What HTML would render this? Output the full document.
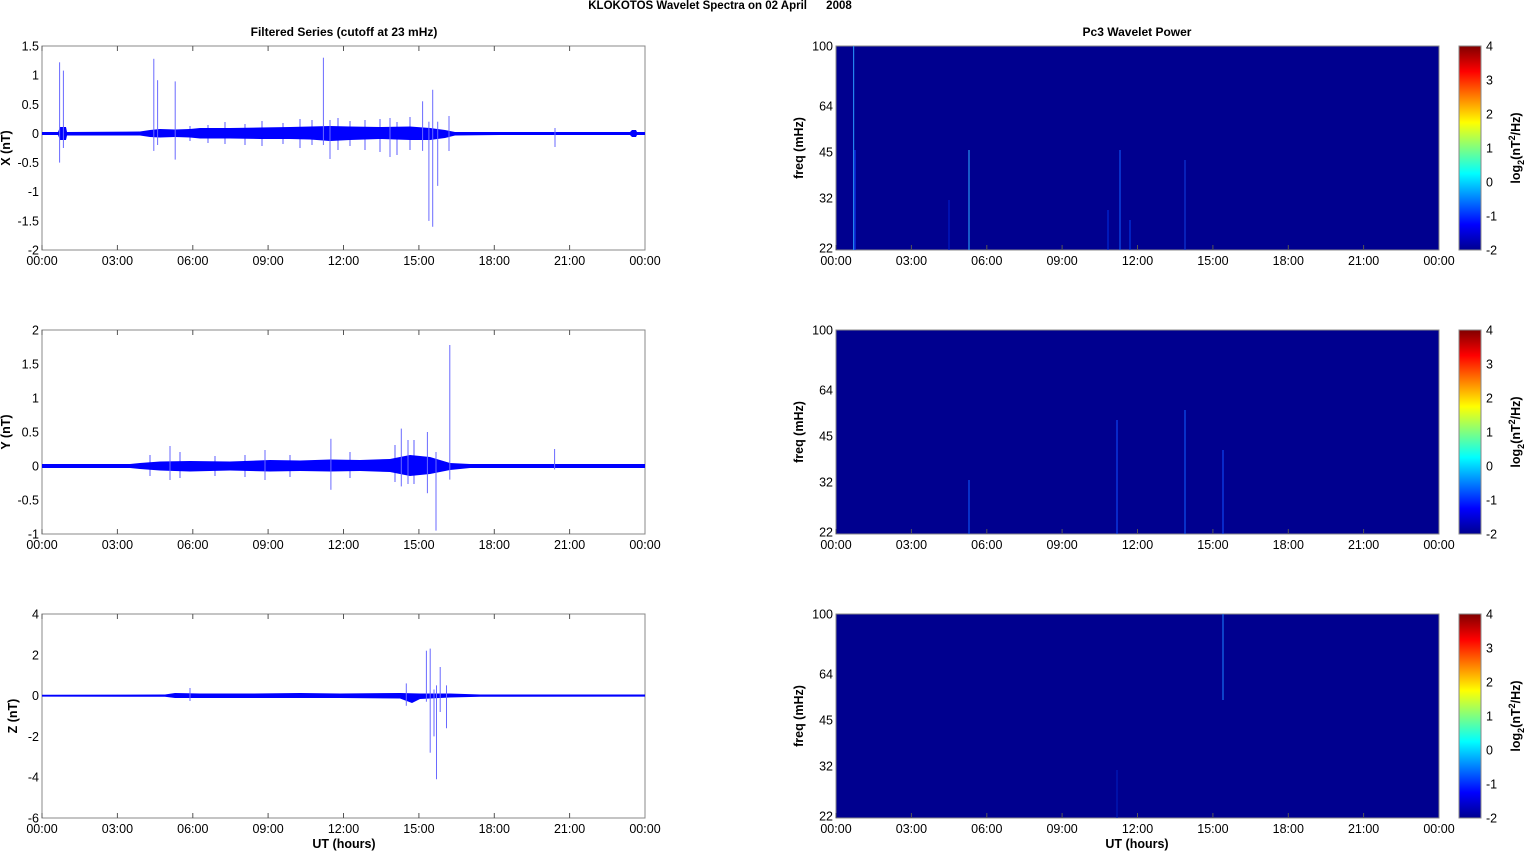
<!DOCTYPE html>
<html><head><meta charset="utf-8"><style>
html,body{margin:0;padding:0;background:#fff;width:1526px;height:851px;overflow:hidden;}
svg{display:block;font-family:"Liberation Sans",Arial,sans-serif;}
</style></head><body>
<svg width="1526" height="851" viewBox="0 0 1526 851" xmlns="http://www.w3.org/2000/svg">
<defs>
<linearGradient id="jet" x1="0" y1="1" x2="0" y2="0">
<stop offset="0" stop-color="#00008f"/>
<stop offset="0.125" stop-color="#0000ff"/>
<stop offset="0.375" stop-color="#00ffff"/>
<stop offset="0.625" stop-color="#ffff00"/>
<stop offset="0.875" stop-color="#ff0000"/>
<stop offset="1" stop-color="#800000"/>
</linearGradient>
<g id="xt">
<line x1="42" y1="0" x2="42" y2="-5"/><line x1="117.4" y1="0" x2="117.4" y2="-5"/><line x1="192.8" y1="0" x2="192.8" y2="-5"/><line x1="268.1" y1="0" x2="268.1" y2="-5"/><line x1="343.5" y1="0" x2="343.5" y2="-5"/><line x1="418.9" y1="0" x2="418.9" y2="-5"/><line x1="494.3" y1="0" x2="494.3" y2="-5"/><line x1="569.6" y1="0" x2="569.6" y2="-5"/>
</g>
<g id="xl" font-size="12.5" text-anchor="middle" fill="#000" stroke="none">
<text x="42" y="15">00:00</text><text x="117.4" y="15">03:00</text><text x="192.8" y="15">06:00</text><text x="268.1" y="15">09:00</text><text x="343.5" y="15">12:00</text><text x="418.9" y="15">15:00</text><text x="494.3" y="15">18:00</text><text x="569.6" y="15">21:00</text><text x="645" y="15">00:00</text>
</g>
<g id="cb">
<rect x="1459" y="0" width="22" height="204" fill="url(#jet)" stroke="#888"/>
<g font-size="12.5"><text x="1486" y="4.5">4</text><text x="1486" y="38.5">3</text><text x="1486" y="72.5">2</text><text x="1486" y="106.5">1</text><text x="1486" y="140.5">0</text><text x="1486" y="174.5">-1</text><text x="1486" y="208.5">-2</text></g>
<text transform="translate(1520,102) rotate(-90)" font-size="12.5" font-weight="bold" text-anchor="middle">log<tspan font-size="9" dy="4">2</tspan><tspan dy="-4">(nT</tspan><tspan font-size="9" dy="-5">2</tspan><tspan dy="5">/Hz)</tspan></text>
<rect x="836" y="0" width="603" height="204" fill="#00008f" stroke="#888"/>
<g font-size="12.5" text-anchor="end"><text x="833" y="4.5">100</text><text x="833" y="64.5">64</text><text x="833" y="110.5">45</text><text x="833" y="156.5">32</text><text x="833" y="206.5">22</text></g>
<text transform="translate(803,102) rotate(-90)" font-size="12.5" font-weight="bold" text-anchor="middle">freq (mHz)</text>
</g>
</defs>
<text x="720" y="9" font-size="11.5" font-weight="bold" text-anchor="middle">KLOKOTOS Wavelet Spectra on 02 April&#160;&#160;&#160;&#160;&#160;&#160;2008</text>
<text x="344" y="36" font-size="12" font-weight="bold" text-anchor="middle">Filtered Series (cutoff at 23 mHz)</text>
<text x="1137" y="36" font-size="12" font-weight="bold" text-anchor="middle">Pc3 Wavelet Power</text>
<text x="344" y="848" font-size="12.5" font-weight="bold" text-anchor="middle">UT (hours)</text>
<text x="1137" y="848" font-size="12.5" font-weight="bold" text-anchor="middle">UT (hours)</text>

<!-- ===== X panel ===== -->
<rect x="42" y="46" width="603" height="204" fill="#fff" stroke="#888"/>
<g font-size="12.5" text-anchor="end">
<text x="39" y="50.5">1.5</text><text x="39" y="79.6">1</text><text x="39" y="108.8">0.5</text><text x="39" y="137.9">0</text><text x="39" y="167.1">-0.5</text><text x="39" y="196.2">-1</text><text x="39" y="225.4">-1.5</text><text x="39" y="254.5">-2</text>
</g>
<text transform="translate(10,148) rotate(-90)" font-size="12.5" font-weight="bold" text-anchor="middle">X (nT)</text>
<polygon fill="#0000ff" points="42,132 58,132 60,127 66,127 67,132 140,131.5 150,130 160,129 175,129.5 190,129 200,128 230,128 260,127.5 290,127 310,126.5 330,126 350,126.5 380,127 410,126.5 430,128 445,130 455,132 500,132 630,132 632,130 636,130 637,132 645,132 645,135 637,135 636,137 632,137 630,135 500,135 455,135.5 445,138 430,140 410,140 380,139 350,140 330,141 310,139.5 290,139 260,139 230,138.5 200,138.5 190,137.5 175,137 160,137.5 150,137 140,135.5 67,135.5 66,140 60,140 58,135 42,135"/>
<g stroke="#0000ff" stroke-width="0.8" opacity="0.8">
<line x1="190" y1="126" x2="190" y2="141"/><line x1="225" y1="122" x2="225" y2="144"/><line x1="262" y1="121" x2="262" y2="146"/><line x1="300" y1="119" x2="300" y2="148"/><line x1="312" y1="120" x2="312" y2="145"/><line x1="338" y1="118" x2="338" y2="150"/><line x1="365" y1="120" x2="365" y2="150"/><line x1="380" y1="119" x2="380" y2="152"/><line x1="397" y1="122" x2="397" y2="155"/><line x1="410" y1="117" x2="410" y2="150"/><line x1="208" y1="125" x2="208" y2="143"/><line x1="245" y1="124" x2="245" y2="145"/><line x1="283" y1="123" x2="283" y2="144"/><line x1="350" y1="121" x2="350" y2="146"/>
</g>
<g stroke="#6a6aff" stroke-width="1">
<line x1="59.6" y1="62.3" x2="59.6" y2="162.6"/><line x1="63.4" y1="70.6" x2="63.4" y2="148"/><line x1="153.8" y1="58.8" x2="153.8" y2="150.9"/><line x1="157.6" y1="80.2" x2="157.6" y2="145"/><line x1="175.2" y1="81.4" x2="175.2" y2="159.6"/><line x1="323.4" y1="57.7" x2="323.4" y2="145"/><line x1="422.6" y1="101.3" x2="422.6" y2="150.9"/><line x1="428.9" y1="121.7" x2="428.9" y2="220.9"/><line x1="432.7" y1="89.7" x2="432.7" y2="226.7"/><line x1="437.7" y1="121.7" x2="437.7" y2="185.9"/><line x1="449" y1="116" x2="449" y2="151"/><line x1="330" y1="120" x2="330" y2="159"/><line x1="390" y1="118" x2="390" y2="157"/><line x1="555" y1="128" x2="555" y2="147"/>
</g>
<g stroke="#555"><use href="#xt" y="250"/><use href="#xt" transform="translate(0,46) scale(1,-1)"/></g>
<use href="#xl" y="250"/>

<!-- ===== Y panel ===== -->
<rect x="42" y="330" width="603" height="204" fill="#fff" stroke="#888"/>
<g font-size="12.5" text-anchor="end">
<text x="39" y="334.5">2</text><text x="39" y="368.5">1.5</text><text x="39" y="402.5">1</text><text x="39" y="436.5">0.5</text><text x="39" y="470.5">0</text><text x="39" y="504.5">-0.5</text><text x="39" y="538.5">-1</text>
</g>
<text transform="translate(10,432) rotate(-90)" font-size="12.5" font-weight="bold" text-anchor="middle">Y (nT)</text>
<polygon fill="#0000ff" points="42,464 130,464 140,463 160,461.5 190,461 230,461.5 270,460 300,460.5 330,459.5 360,460 390,459 410,455 430,457 450,463 470,464 645,464 645,468 470,468 450,470 430,474 410,476 390,472 360,471 330,471.5 300,471 270,471.5 230,470.5 190,471.5 160,470.5 140,469 130,468 42,468"/>
<g stroke="#0000ff" stroke-width="0.8" opacity="0.8">
<line x1="150" y1="455" x2="150" y2="476"/><line x1="180" y1="452" x2="180" y2="478"/><line x1="215" y1="456" x2="215" y2="476"/><line x1="245" y1="455" x2="245" y2="477"/><line x1="290" y1="455" x2="290" y2="477"/><line x1="350" y1="452" x2="350" y2="478"/><line x1="395" y1="445" x2="395" y2="482"/><line x1="414" y1="440" x2="414" y2="484"/>
</g>
<g stroke="#6a6aff" stroke-width="1">
<line x1="449.8" y1="345" x2="449.8" y2="479.6"/><line x1="436" y1="452" x2="436" y2="530.6"/><line x1="401.3" y1="428.6" x2="401.3" y2="486.4"/><line x1="427.4" y1="432" x2="427.4" y2="493.2"/><line x1="330.9" y1="438.8" x2="330.9" y2="489.8"/><line x1="554.6" y1="449" x2="554.6" y2="469.4"/><line x1="408" y1="440" x2="408" y2="484"/><line x1="170" y1="446" x2="170" y2="480"/><line x1="265" y1="450" x2="265" y2="480"/>
</g>
<g stroke="#555"><use href="#xt" y="534"/><use href="#xt" transform="translate(0,330) scale(1,-1)"/></g>
<use href="#xl" y="534"/>

<!-- ===== Z panel ===== -->
<rect x="42" y="614" width="603" height="204" fill="#fff" stroke="#888"/>
<g font-size="12.5" text-anchor="end">
<text x="39" y="618.5">4</text><text x="39" y="659.3">2</text><text x="39" y="700.1">0</text><text x="39" y="740.9">-2</text><text x="39" y="781.7">-4</text><text x="39" y="822.5">-6</text>
</g>
<text transform="translate(17,716) rotate(-90)" font-size="12.5" font-weight="bold" text-anchor="middle">Z (nT)</text>
<polygon fill="#0000ff" points="42,694.8 165,694.5 175,693 200,693.5 250,693.5 300,693 340,693.5 400,693 420,693.5 450,693.5 480,694.5 645,694.5 645,696.6 480,696.8 450,697.5 420,699 412,703 400,698.5 340,698 300,698 250,698 200,698 175,698 165,696.8 42,696.6"/>
<g stroke="#6a6aff" stroke-width="1">
<line x1="426.4" y1="650.7" x2="426.4" y2="701.7"/><line x1="430.2" y1="648.6" x2="430.2" y2="752.7"/><line x1="434" y1="689.5" x2="434" y2="736.4"/><line x1="436.5" y1="685.4" x2="436.5" y2="779.2"/><line x1="440.2" y1="667" x2="440.2" y2="712"/><line x1="446.5" y1="685.4" x2="446.5" y2="728.2"/><line x1="406.3" y1="683.4" x2="406.3" y2="705.8"/><line x1="190" y1="688" x2="190" y2="701"/>
</g>
<g stroke="#555"><use href="#xt" y="818"/><use href="#xt" transform="translate(0,614) scale(1,-1)"/></g>
<use href="#xl" y="818"/>

<!-- ===== right panels ===== -->
<use href="#cb" y="46"/>
<use href="#cb" y="330"/>
<use href="#cb" y="614"/>
<g stroke="#555" transform="translate(794,0)"><use href="#xt" y="250"/><use href="#xt" y="534"/><use href="#xt" y="818"/></g>
<g transform="translate(794,0)"><use href="#xl" y="250"/><use href="#xl" y="534"/><use href="#xl" y="818"/></g>
<g stroke-width="1.2" opacity="0.85">
<line x1="853.6" y1="46" x2="853.6" y2="250" stroke="#2a9aff"/>
<line x1="855" y1="150" x2="855" y2="250" stroke="#1040ff"/>
<line x1="969" y1="150" x2="969" y2="250" stroke="#30b0ff"/>
<line x1="949" y1="200" x2="949" y2="250" stroke="#0020d0"/>
<line x1="1120" y1="150" x2="1120" y2="250" stroke="#1060ff"/>
<line x1="1108" y1="210" x2="1108" y2="250" stroke="#0030e0"/>
<line x1="1130" y1="220" x2="1130" y2="250" stroke="#0040f0"/>
<line x1="1185" y1="160" x2="1185" y2="250" stroke="#1040e0"/>
<line x1="969" y1="480" x2="969" y2="534" stroke="#1060ff"/>
<line x1="1117" y1="420" x2="1117" y2="534" stroke="#1050ff"/>
<line x1="1185" y1="410" x2="1185" y2="534" stroke="#1060ff"/>
<line x1="1223" y1="450" x2="1223" y2="534" stroke="#1050ff"/>
<line x1="1223" y1="614" x2="1223" y2="700" stroke="#1a80ff"/>
<line x1="1117" y1="770" x2="1117" y2="818" stroke="#0020c0"/>
</g>
</svg>
</body></html>
